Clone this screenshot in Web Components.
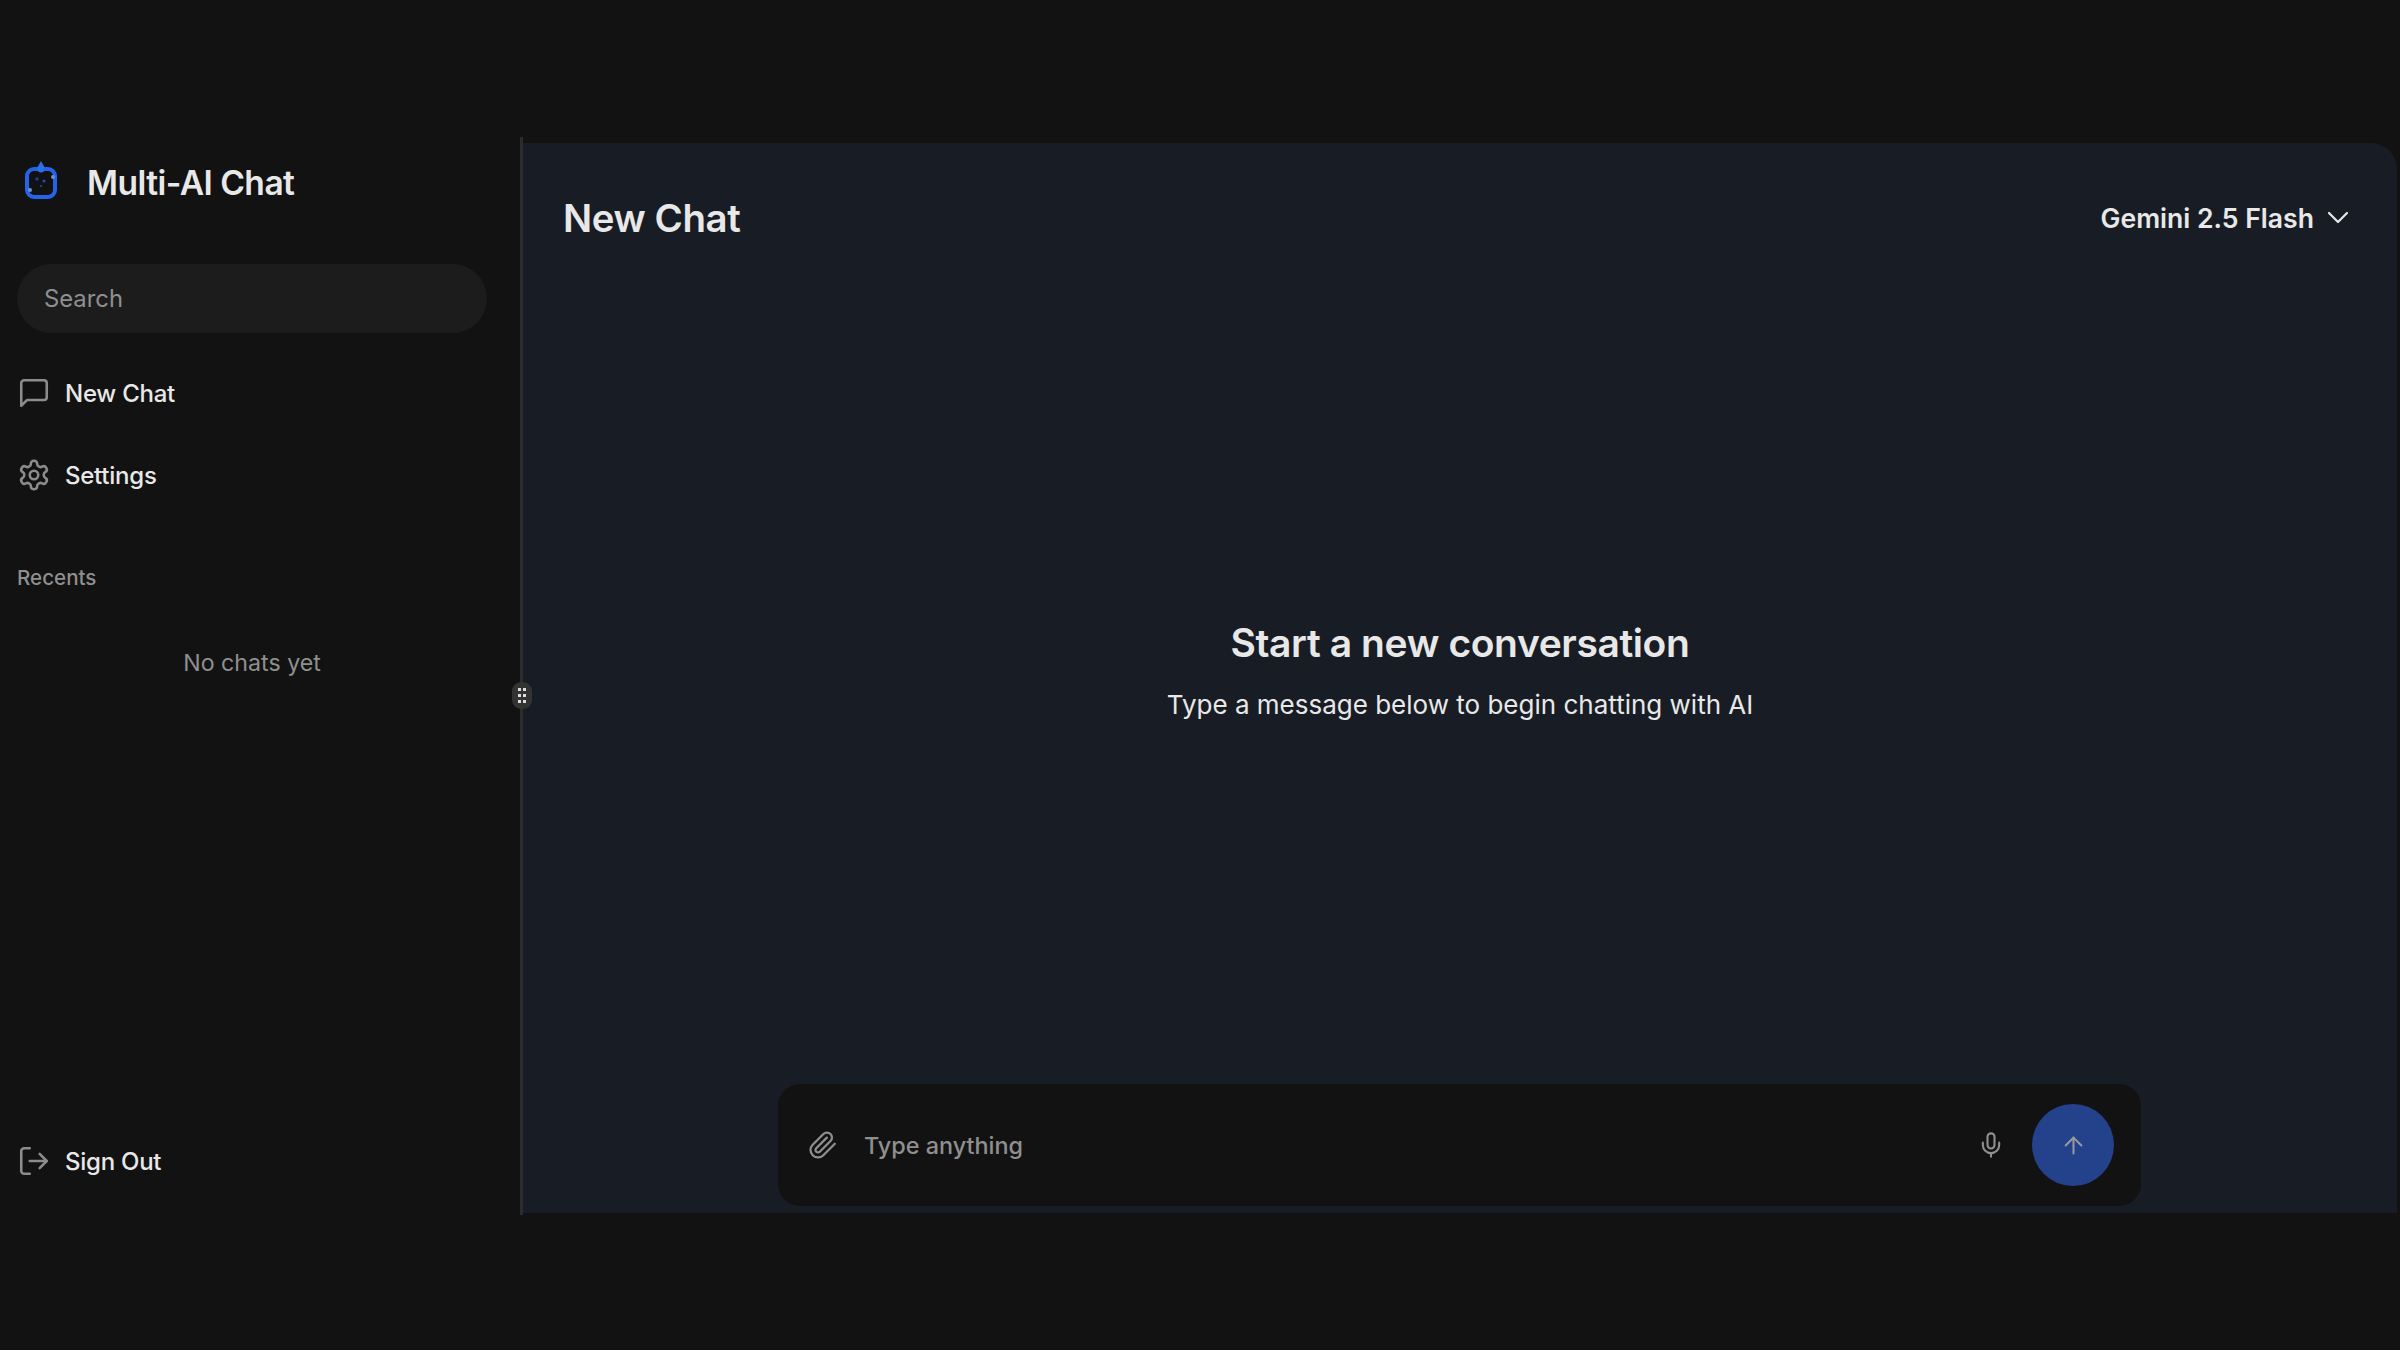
<!DOCTYPE html>
<html lang="en">
<head>
<meta charset="utf-8">
<title>Multi-AI Chat</title>
<style>
  html, body { margin: 0; height: 100%; background: #121212; }
  body { font-family: Inter, "Liberation Sans", sans-serif; color: #e8e8e8; overflow: hidden; }
</style>
</head>
<body>
<app-shell>
  <side-bar slot="side">
    <nav-item>
      <svg slot="icon" viewBox="0 0 24 24"><path d="M21 15a2 2 0 0 1-2 2H7l-4 4V5a2 2 0 0 1 2-2h14a2 2 0 0 1 2 2z"/></svg>
      New Chat
    </nav-item>
    <nav-item>
      <svg slot="icon" viewBox="0 0 24 24"><path d="M12.22 2h-.44a2 2 0 0 0-2 2v.18a2 2 0 0 1-1 1.73l-.43.25a2 2 0 0 1-2 0l-.15-.08a2 2 0 0 0-2.73.73l-.22.38a2 2 0 0 0 .73 2.73l.15.1a2 2 0 0 1 1 1.72v.51a2 2 0 0 1-1 1.74l-.15.09a2 2 0 0 0-.73 2.73l.22.38a2 2 0 0 0 2.73.73l.15-.08a2 2 0 0 1 2 0l.43.25a2 2 0 0 1 1 1.73V20a2 2 0 0 0 2 2h.44a2 2 0 0 0 2-2v-.18a2 2 0 0 1 1-1.73l.43-.25a2 2 0 0 1 2 0l.15.08a2 2 0 0 0 2.73-.73l.22-.39a2 2 0 0 0-.73-2.73l-.15-.08a2 2 0 0 1-1-1.74v-.5a2 2 0 0 1 1-1.74l.15-.09a2 2 0 0 0 .73-2.73l-.22-.38a2 2 0 0 0-2.73-.73l-.15.08a2 2 0 0 1-2 0l-.43-.25a2 2 0 0 1-1-1.73V4a2 2 0 0 0-2-2z"/><circle cx="12" cy="12" r="3"/></svg>
      Settings
    </nav-item>
    <nav-item slot="foot">
      <svg slot="icon" viewBox="0 0 24 24"><path d="M9 21H5a2 2 0 0 1-2-2V5a2 2 0 0 1 2-2h4"/><path d="M16 17l5-5-5-5"/><path d="M21 12H9"/></svg>
      Sign Out
    </nav-item>
  </side-bar>
  <chat-panel slot="main"></chat-panel>
</app-shell>

<script>
// Ligne de base pour les icones : trait fin, couleur grise
const iconCss = `
  svg { fill: none; stroke: currentColor; stroke-width: 1.8; stroke-linecap: round; stroke-linejoin: round; display: block; }
`;

class AppShell extends HTMLElement {
  constructor() {
    super();
    this.attachShadow({ mode: 'open' });
    this.shadowRoot.innerHTML = `
      <style>
        :host { display: block; padding-top: 137px; }
        .row { display: flex; height: 1078px; position: relative; }
        .handle {
          position: absolute; left: 512px; top: 545px; width: 20px; height: 27px;
          border-radius: 9px; background: #333; display: grid;
          grid-template-columns: 3px 3px; grid-auto-rows: 3px; gap: 3px 2px;
          justify-content: center; align-content: center;
        }
        .handle i { background: #ddd; }
      </style>
      <div class="row">
        <slot name="side"></slot>
        <slot name="main"></slot>
        <div class="handle"><i></i><i></i><i></i><i></i><i></i><i></i></div>
      </div>
    `;
  }
}

class SideBar extends HTMLElement {
  constructor() {
    super();
    this.attachShadow({ mode: 'open' });
    this.shadowRoot.innerHTML = `
      <style>
        :host {
          display: flex; flex-direction: column; box-sizing: border-box;
          width: 523px; flex: none; padding: 0 33px 13px 17px;
          border-right: 3px solid #2b2c2e;
        }
        .brand { display: flex; align-items: center; height: 90px; gap: 29px; padding-left: 7px; }
        .brand svg { width: 34px; height: 42px; flex: none; margin-top: -3px; }
        .brand span { font-size: 33.6px; font-weight: 600; letter-spacing: -0.55px; color: #e8e8e8; }
        .search {
          margin-top: 37px; height: 69px; border-radius: 35px; background: #1c1c1c;
          display: flex; align-items: center; padding-left: 27px;
          font-size: 23.8px; color: #8f8f8f;
        }
        .nav { margin-top: 19px; display: flex; flex-direction: column; }
        .recents { margin-top: 48px; font-size: 20.6px; font-weight: 500; color: #8f8f8f; line-height: 28px; }
        .empty { margin-top: 56px; text-align: center; font-size: 23.2px; color: #8f8f8f; line-height: 30px; }
        .foot { margin-top: auto; }
      </style>
      <div class="brand">
        <svg viewBox="0 0 34 42">
          <path d="M17 1 L21 8 H13 Z" fill="#2f6fe8"/>
          <rect x="3" y="9" width="28" height="28" rx="7" fill="none" stroke="#2563eb" stroke-width="4"/>
          <circle cx="17" cy="9" r="3.5" fill="#2f6fe8"/>
          <circle cx="13" cy="19" r="1.8" fill="#1d3f8f"/>
          <circle cx="20" cy="21" r="1.6" fill="#1d4fb0"/>
          <circle cx="17" cy="26" r="1.1" fill="#1d4fb0"/>
          <circle cx="6" cy="30" r="2" fill="#6f93c9"/>
          <circle cx="29" cy="17" r="2" fill="#6f93c9"/>
        </svg>
        <span>Multi-AI Chat</span>
      </div>
      <div class="search">Search</div>
      <div class="nav"><slot></slot></div>
      <div class="recents">Recents</div>
      <div class="empty">No chats yet</div>
      <div class="foot"><slot name="foot"></slot></div>
    `;
  }
}

class NavItem extends HTMLElement {
  constructor() {
    super();
    this.attachShadow({ mode: 'open' });
    this.shadowRoot.innerHTML = `
      <style>
        :host {
          display: flex; align-items: center; height: 82px; gap: 14px;
          font-size: 24px; font-weight: 500; letter-spacing: -0.25px; color: #e8e8e8;
        }
        .ico { width: 34px; height: 34px; flex: none; color: #8c8c8c; }
        ::slotted(svg) {
          width: 34px; height: 34px; display: block; fill: none; stroke: currentColor;
          stroke-width: 1.8; stroke-linecap: round; stroke-linejoin: round;
        }
      </style>
      <span class="ico"><slot name="icon"></slot></span>
      <span><slot></slot></span>
    `;
  }
}

class ChatPanel extends HTMLElement {
  constructor() {
    super();
    this.attachShadow({ mode: 'open' });
    this.shadowRoot.innerHTML = `
      <style>
        :host {
          display: flex; flex-direction: column; flex: 1; min-width: 0;
          margin: 6px 3px 2px 0; background: #181d25; border-top-right-radius: 26px;
        }
        header {
          display: flex; align-items: center; justify-content: space-between;
          height: 150px; padding: 0 47px 0 40px; flex: none;
        }
        h1 { margin: 0; font-size: 38.4px; font-weight: 600; letter-spacing: -0.4px; color: #e8e8e8; }
        .model { display: flex; align-items: center; gap: 12px; font-size: 26.6px; font-weight: 600; color: #e8e8e8; }
        .model svg { width: 24px; height: 24px; stroke-width: 2.2; }
        ${iconCss}
      </style>
      <header>
        <h1>New Chat</h1>
        <div class="model">Gemini 2.5 Flash
          <svg viewBox="0 0 24 24"><path d="M3 7l9 9 9-9"/></svg>
        </div>
      </header>
      <empty-state></empty-state>
      <chat-composer></chat-composer>
    `;
  }
}

class EmptyState extends HTMLElement {
  constructor() {
    super();
    this.attachShadow({ mode: 'open' });
    this.shadowRoot.innerHTML = `
      <style>
        :host {
          display: flex; flex-direction: column; align-items: center; justify-content: center;
          flex: 1; padding-bottom: 35px; text-align: center; color: #e8e8e8;
        }
        h2 { margin: 0; font-size: 39px; font-weight: 600; letter-spacing: -0.4px; line-height: 52px; }
        p { margin: 16px 0 0; font-size: 26px; line-height: 40px; }
      </style>
      <h2>Start a new conversation</h2>
      <p>Type a message below to begin chatting with AI</p>
    `;
  }
}

class ChatComposer extends HTMLElement {
  constructor() {
    super();
    this.attachShadow({ mode: 'open' });
    this.shadowRoot.innerHTML = `
      <style>
        :host {
          display: flex; align-items: center; box-sizing: border-box; flex: none;
          width: 1363px; height: 122px; margin: 0 0 7px 255px; padding: 0 27px 0 30px;
          background: #121212; border-radius: 22px; color: #8f8f8f;
        }
        .clip { width: 30px; height: 30px; flex: none; }
        .text { margin-left: 26px; flex: 1; font-size: 23.4px; font-weight: 500; }
        .mic { width: 28px; height: 28px; flex: none; margin-right: 27px; }
        .send {
          width: 82px; height: 82px; border-radius: 50%; background: #24418c; flex: none;
          display: flex; align-items: center; justify-content: center; color: #9a9a9a;
        }
        .send svg { width: 27px; height: 27px; }
        ${iconCss}
      </style>
      <svg class="clip" viewBox="0 0 24 24"><path d="M21.44 11.05l-9.19 9.19a6 6 0 0 1-8.49-8.49l8.57-8.57A4 4 0 1 1 18 8.84l-8.59 8.57a2 2 0 0 1-2.83-2.83l8.49-8.48"/></svg>
      <div class="text">Type anything</div>
      <svg class="mic" viewBox="0 0 24 24"><path d="M12 2a3 3 0 0 0-3 3v7a3 3 0 0 0 6 0V5a3 3 0 0 0-3-3Z"/><path d="M19 10v2a7 7 0 0 1-14 0v-2"/><path d="M12 19v3"/></svg>
      <div class="send"><svg viewBox="0 0 24 24"><path d="M5 12l7-7 7 7"/><path d="M12 19V5"/></svg></div>
    `;
  }
}

customElements.define('app-shell', AppShell);
customElements.define('side-bar', SideBar);
customElements.define('nav-item', NavItem);
customElements.define('chat-panel', ChatPanel);
customElements.define('empty-state', EmptyState);
customElements.define('chat-composer', ChatComposer);
</script>
</body>
</html>
